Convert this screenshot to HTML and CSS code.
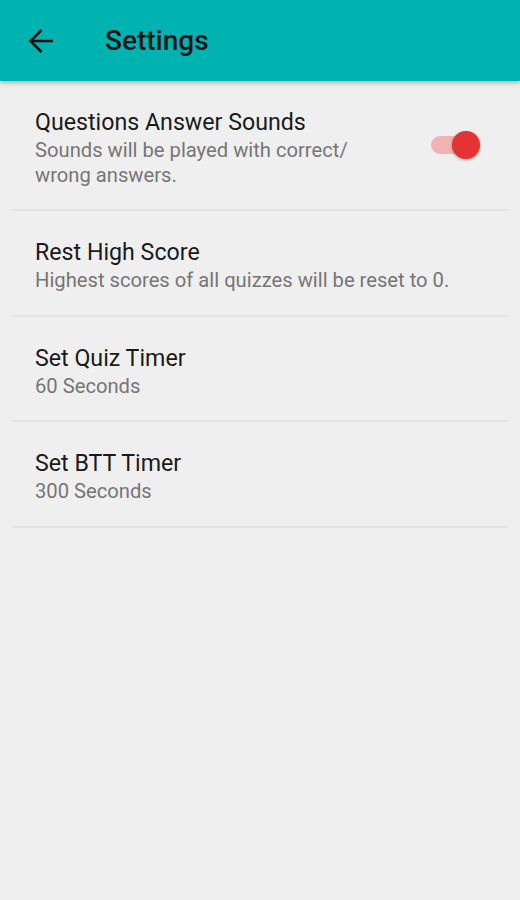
FILE: index.html
```html
<!DOCTYPE html>
<html>
<head>
<meta charset="utf-8">
<link rel="stylesheet" href="styles.css">
</head>
<body>
<header class="appbar">
  <svg class="back" viewBox="0 0 26 26"><path d="M2.5 13H25 M13.5 2 L2.5 13 L13.5 24" fill="none" stroke="#111" stroke-width="2.6"/></svg>
  <h1 class="title">Settings</h1>
</header>
<main class="list">
  <div class="row first">
    <div class="texts">
      <div class="primary">Questions Answer Sounds</div>
      <div class="secondary">Sounds will be played with correct/<br>wrong answers.</div>
    </div>
    <div class="switch"><div class="track"></div><div class="thumb"></div></div>
  </div>
  <div class="row">
    <div class="texts">
      <div class="primary">Rest High Score</div>
      <div class="secondary">Highest scores of all quizzes will be reset to 0.</div>
    </div>
  </div>
  <div class="row">
    <div class="texts">
      <div class="primary">Set Quiz Timer</div>
      <div class="secondary">60 Seconds</div>
    </div>
  </div>
  <div class="row">
    <div class="texts">
      <div class="primary">Set BTT Timer</div>
      <div class="secondary">300 Seconds</div>
    </div>
  </div>
</main>
</body>
</html>
```
FILE: styles.css
```css
html, body {
  margin: 0;
  padding: 0;
  background: #efefef;
  font-family: Roboto, "Noto Sans", sans-serif;
  width: 520px;
  height: 900px;
  overflow: hidden;
}
.appbar {
  height: 81px;
  background: #00b2b0;
  display: flex;
  align-items: center;
  box-shadow: 0 2px 4px rgba(0,0,0,0.25);
  position: relative;
  z-index: 1;
}
.back {
  margin-left: 28px;
  width: 26px;
  height: 26px;
  flex: none;
}
.title {
  margin: 0 0 0 51px;
  font-size: 28px;
  font-weight: 500;
  color: #151515;
}
.list {
  padding: 0 12px;
}
.row {
  display: flex;
  align-items: center;
  border-bottom: 2px solid #e3e3e3;
  min-height: 105.5px;
  box-sizing: border-box;
  padding: 0 23px;
}
.row.first {
  min-height: 130px;
}
.texts {
  flex: 1;
  padding-top: 6px;
}
.primary {
  font-size: 23.2px;
  color: #1a1a1a;
  line-height: 28px;
}
.secondary {
  font-size: 20.2px;
  color: #767676;
  line-height: 25px;
  margin-top: 2px;
}
.switch {
  position: relative;
  width: 54px;
  height: 30px;
  margin-right: 4px;
}
.track {
  position: absolute;
  left: 4px;
  top: 6px;
  width: 38px;
  height: 18px;
  border-radius: 9px;
  background: #f2b3b3;
}
.thumb {
  position: absolute;
  left: 25px;
  top: 1px;
  width: 28px;
  height: 28px;
  border-radius: 50%;
  background: #e53232;
  box-shadow: 0 1px 3px rgba(0,0,0,0.35);
}
```
